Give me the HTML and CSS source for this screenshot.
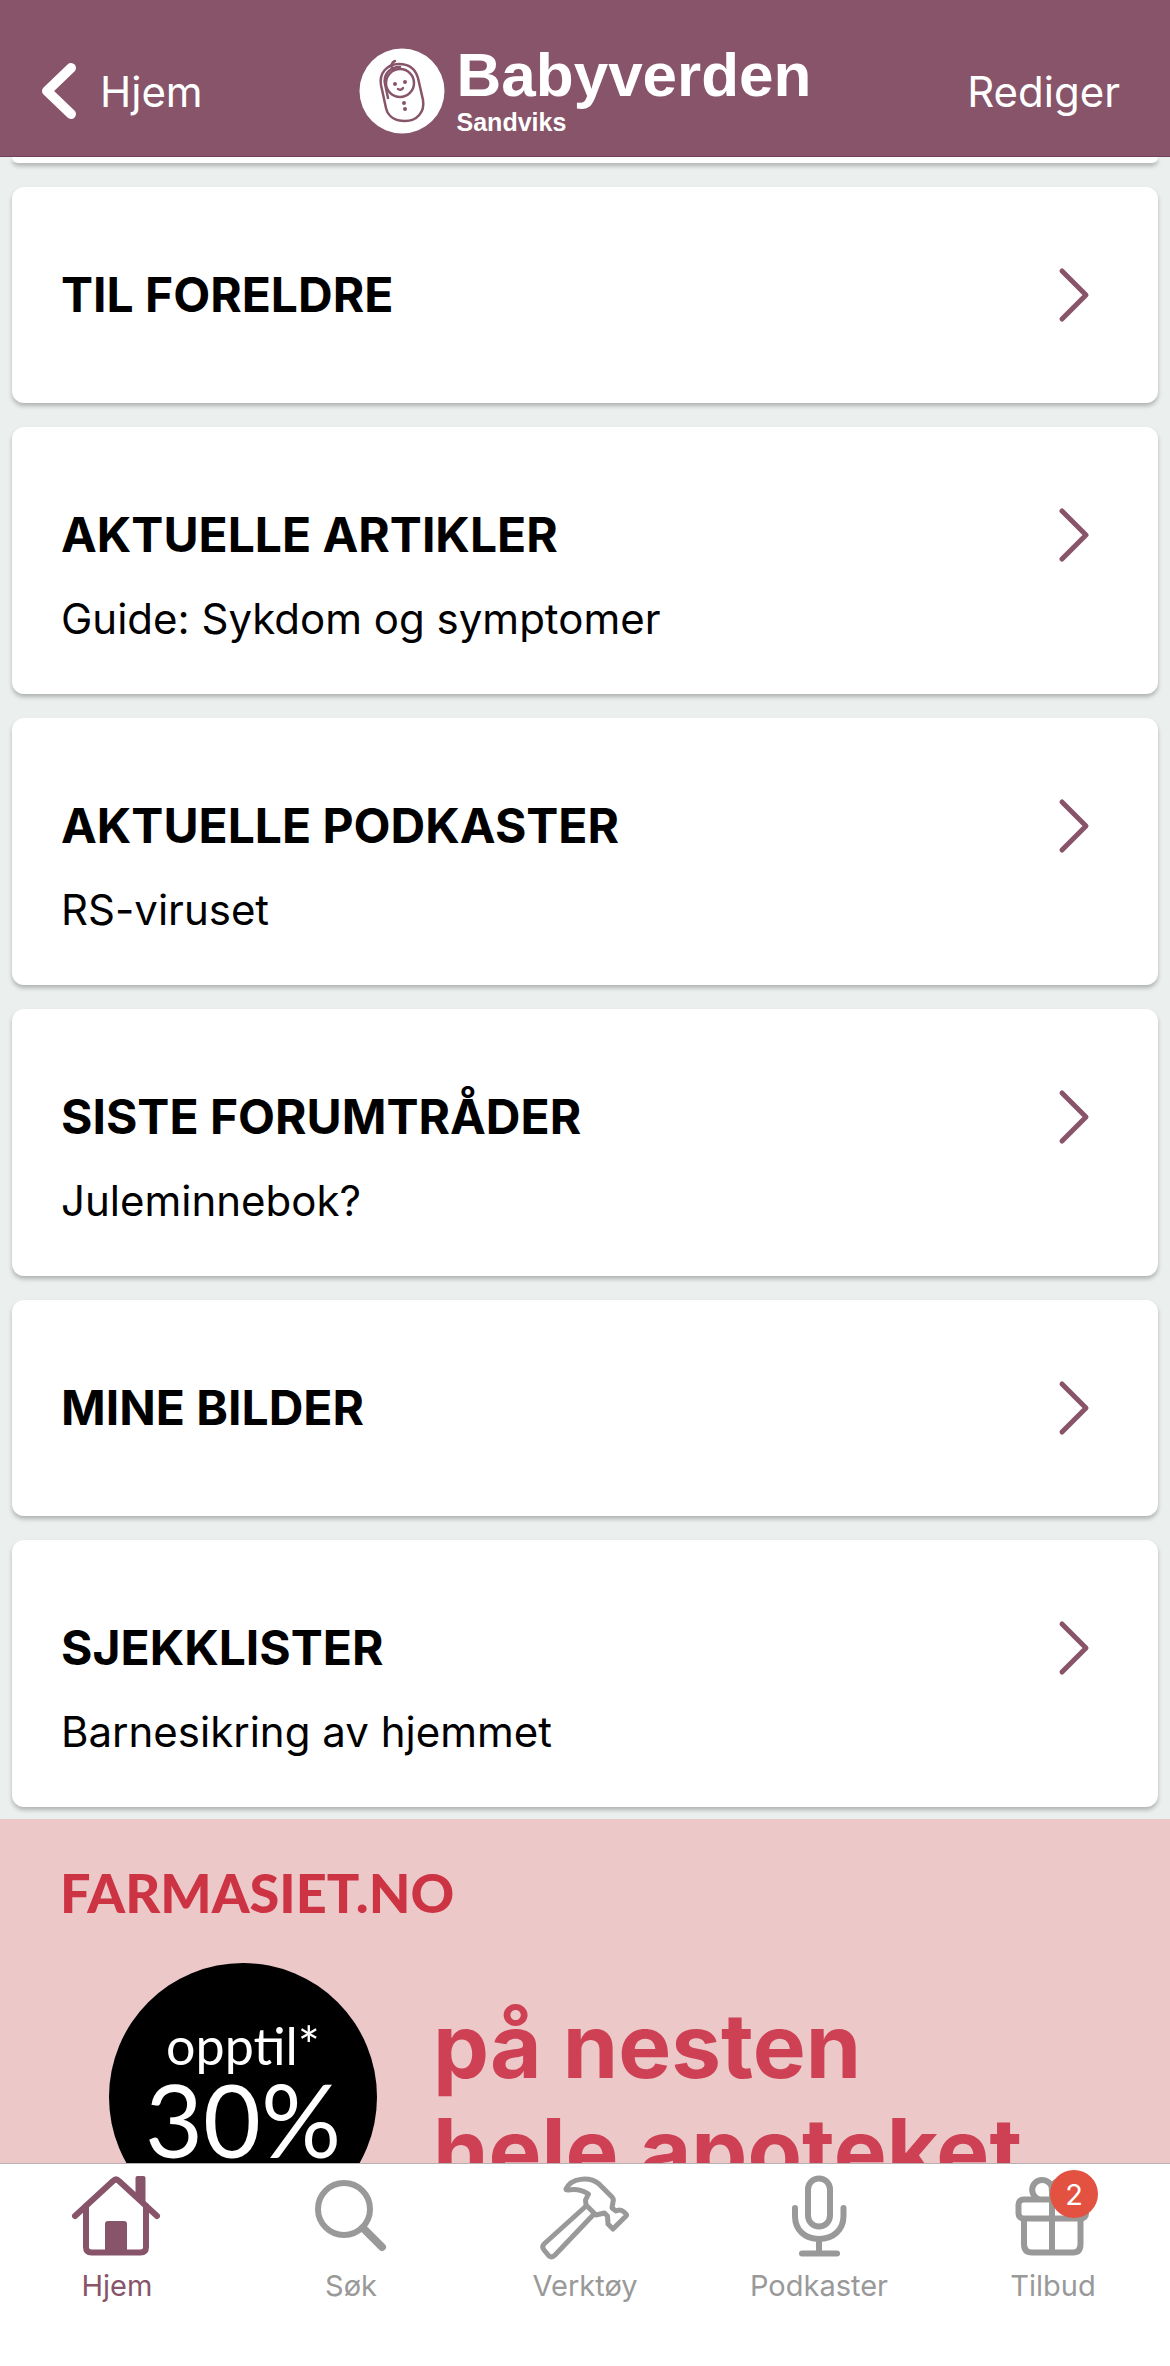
FILE: index.html
```html
<!DOCTYPE html>
<html lang="no">
<head>
  <meta charset="UTF-8">
  <meta name="viewport" content="width=device-width, initial-scale=1">
  <title>Babyverden</title>
  <link rel="stylesheet" href="styles.css">
</head>
<body>
  <header class="header">
    <a href="#" class="back">
      <svg class="back-icon" width="36" height="58" viewBox="0 0 36 58"><path d="M31 6L7 29L31 52"/></svg>
      <span>Hjem</span>
    </a>

    <div class="logo">
      <svg class="logo-icon" width="86" height="86" viewBox="0 0 86 86">
        <circle cx="43" cy="43" r="42.5" fill="#fff"/>
        <g class="baby">
          <path d="M40 16C28 16 20 25 22 37L27 60C29 69 37 73 46 73C58 73 66 64 64 52L59 30C56 20 49 16 40 16Z"/>
          <path d="M29 50L26 36C24 26 31 19 41 19"/>
          <circle cx="41" cy="35" r="14"/>
          <path d="M34 21C31 18 33 14 36 13"/>
          <path d="M39 41C41 42 43 42 44 40"/>
        </g>
        <g fill="#875469">
          <circle cx="36" cy="36" r="2"/>
          <circle cx="46" cy="34" r="2"/>
          <circle cx="45" cy="55" r="2"/>
          <circle cx="46" cy="61" r="2"/>
        </g>
      </svg>
      <div class="logo-text">
        <span class="logo-name">Babyverden</span>
        <span class="logo-sub">Sandviks</span>
      </div>
    </div>

    <button type="button" class="edit">Rediger</button>
  </header>

  <main class="content">
    <div class="cards">
      <div class="card card-scrolled"></div>

      <a href="#" class="card">
        <div class="card-head">
          <h2>TIL FORELDRE</h2>
          <svg class="arrow" width="32" height="56" viewBox="0 0 32 56"><path d="M4 4L28 28L4 52"/></svg>
        </div>
      </a>

      <a href="#" class="card">
        <div class="card-head">
          <h2>AKTUELLE ARTIKLER</h2>
          <svg class="arrow" width="32" height="56" viewBox="0 0 32 56"><path d="M4 4L28 28L4 52"/></svg>
        </div>
        <p>Guide: Sykdom og symptomer</p>
      </a>

      <a href="#" class="card">
        <div class="card-head">
          <h2>AKTUELLE PODKASTER</h2>
          <svg class="arrow" width="32" height="56" viewBox="0 0 32 56"><path d="M4 4L28 28L4 52"/></svg>
        </div>
        <p>RS-viruset</p>
      </a>

      <a href="#" class="card">
        <div class="card-head">
          <h2>SISTE FORUMTRÅDER</h2>
          <svg class="arrow" width="32" height="56" viewBox="0 0 32 56"><path d="M4 4L28 28L4 52"/></svg>
        </div>
        <p>Juleminnebok?</p>
      </a>

      <a href="#" class="card">
        <div class="card-head">
          <h2>MINE BILDER</h2>
          <svg class="arrow" width="32" height="56" viewBox="0 0 32 56"><path d="M4 4L28 28L4 52"/></svg>
        </div>
      </a>

      <a href="#" class="card">
        <div class="card-head">
          <h2>SJEKKLISTER</h2>
          <svg class="arrow" width="32" height="56" viewBox="0 0 32 56"><path d="M4 4L28 28L4 52"/></svg>
        </div>
        <p>Barnesikring av hjemmet</p>
      </a>
    </div>

    <a href="#" class="banner">
      <div class="banner-brand">FARMASIET.NO</div>
      <div class="banner-row">
        <div class="banner-circle">
          <span class="banner-upto">opptil*</span>
          <span class="banner-percent">30%</span>
        </div>
        <div class="banner-text">på nesten<br>hele apoteket</div>
      </div>
    </a>
  </main>

  <nav class="tabs">
    <a href="#" class="tab active">
      <svg class="tab-icon" width="96" height="92" viewBox="0 0 96 92">
        <path d="M6 46L44 11Q47 8 50 11L88 46"/>
        <path d="M17 36V77Q17 82.5 22.5 82.5H71.5Q77 82.5 77 77V36"/>
        <path class="filled" d="M66.500 27V8Q66.500 6 68.500 6H74.500Q76.500 6 76.500 8V36Z"/>
        <rect class="filled" x="36" y="51" width="22" height="32" rx="3"/>
      </svg>
      <span>Hjem</span>
    </a>
    <a href="#" class="tab">
      <svg class="tab-icon" width="96" height="92" viewBox="0 0 96 92">
        <circle cx="41" cy="39" r="26"/>
        <path class="handle" d="M60 58L79 77"/>
      </svg>
      <span>Søk</span>
    </a>
    <a href="#" class="tab">
      <svg class="tab-icon hammer" width="96" height="92" viewBox="0 0 96 92">
        <path d="M29 19C34 8 52 6 62 14L75 27Q77 29 76 32L75 38L79 41L82 40Q85 40 87 42L89 44Q90 45 89 46L76 59L71 54L70.500 46L67.500 43L59 45L49 35L48.500 30L51.500 24Q42 18 31 20Q29 20 29 19Z"/>
        <path d="M48 37L7 74Q4.500 77 7 80L12 86Q15 88 18 85L57 44"/>
      </svg>
      <span>Verktøy</span>
    </a>
    <a href="#" class="tab">
      <svg class="tab-icon" width="96" height="92" viewBox="0 0 96 92">
        <rect x="37" y="8.500" width="22" height="48" rx="11"/>
        <path d="M24 38V46C24 60 34 69 48 69S72.500 60 72.500 46V38"/>
        <path d="M48 69V83M31 83.500H66"/>
      </svg>
      <span>Podkaster</span>
    </a>
    <a href="#" class="tab">
      <div class="icon-wrap">
        <svg class="tab-icon" width="96" height="92" viewBox="0 0 96 92">
          <rect x="13.500" y="29.500" width="67.500" height="19" rx="5"/>
          <path d="M19 49V74Q19 82.500 27 82.500H68Q75.500 82.500 75.500 74V49"/>
          <path d="M47 29V82"/>
          <path d="M33 29A10 10 0 1 1 47 22V29M47 22A10 10 0 1 1 61 29"/>
        </svg>
        <span class="badge">2</span>
      </div>
      <span>Tilbud</span>
    </a>
  </nav>
</body>
</html>
```
FILE: styles.css
```css
* {
  box-sizing: border-box;
}

body {
  display: flex;
  flex-direction: column;
  height: 100vh;
  margin: 0;
  background-color: #ebefee;
  color: #000;
  font-family: Inter, Roboto, sans-serif;
  font-size: 42px;
}

a {
  color: inherit;
  text-decoration: none;
}

/* Header */
.header {
  display: grid;
  grid-template-columns: 1fr auto 1fr;
  align-items: center;
  flex-shrink: 0;
  padding: 40px 40px 14px;
  background-color: #875469;
  border-bottom: 1px solid #70405a;
  color: #fff;
}

.back {
  display: flex;
  align-items: center;
  gap: 24px;
}

.back-icon {
  fill: none;
  stroke: #fff;
  stroke-width: 10;
  stroke-linecap: round;
  stroke-linejoin: round;
}

.edit {
  justify-self: end;
  padding: 0 10px 0 0;
  border: none;
  background: none;
  color: #fff;
  font: inherit;
  cursor: pointer;
}

.logo {
  display: flex;
  align-items: center;
  gap: 12px;
  font-family: "Liberation Sans", Arial, sans-serif;
  font-weight: bold;
}

.baby {
  fill: none;
  stroke: #875469;
  stroke-width: 2.5;
  stroke-linecap: round;
}

.logo-text {
  display: flex;
  flex-direction: column;
  height: 102px;
}

.logo-name {
  font-size: 62px;
  line-height: 70px;
}

.logo-sub {
  font-size: 25px;
  line-height: 24px;
}

/* Cards */
.content {
  flex: 1;
  min-height: 0;
  overflow: hidden;
}

.cards {
  display: flex;
  flex-direction: column;
  gap: 24px;
  padding: 0 12px 12px;
}

.card {
  display: block;
  padding: 80px 68px 47px 49px;
  background-color: #fff;
  border-radius: 12px;
  box-shadow: 0 3px 4px rgba(0, 0, 0, 0.25);
}

/* Bottom edge of the card that is scrolled under the header */
.card-scrolled {
  padding: 6px 0 0;
  border-radius: 0 0 12px 12px;
}

.card-head {
  display: flex;
  align-items: center;
  justify-content: space-between;
}

.card-head:only-child {
  margin-bottom: 33px;
}

h2 {
  margin: 0;
  font-size: 48px;
  font-weight: 700;
  line-height: 56px;
}

.card p {
  margin: 28px 0 0;
  line-height: 56px;
}

.arrow {
  fill: none;
  stroke: #875469;
  stroke-width: 5;
  stroke-linecap: round;
  stroke-linejoin: round;
}

/* Banner */
.banner {
  display: block;
  height: 100%;
  padding: 46px 60px 0;
  background-color: #ecc8c9;
  color: #ce4154;
}

.banner-brand {
  color: #cc3343;
  font-family: Lato, sans-serif;
  font-size: 54px;
  font-weight: 900;
  line-height: 56px;
}

.banner-row {
  display: flex;
  align-items: flex-start;
  gap: 56px;
  padding: 42px 49px 0;
}

.banner-circle {
  display: flex;
  flex-direction: column;
  align-items: center;
  flex-shrink: 0;
  width: 268px;
  height: 268px;
  padding-top: 52px;
  background-color: #000;
  border-radius: 50%;
  color: #fff;
  font-family: Lato, sans-serif;
}

.banner-upto {
  font-size: 52px;
  line-height: 60px;
}

.banner-percent {
  font-size: 100px;
  line-height: 88px;
}

.banner-text {
  padding-top: 30px;
  font-size: 89px;
  font-weight: 700;
  line-height: 105px;
  white-space: nowrap;
}

/* Tab bar */
.tabs {
  display: flex;
  flex-shrink: 0;
  height: 203px;
  padding-top: 6px;
  background-color: #fff;
  border-top: 1px solid #b8b2b2;
}

.tab {
  display: flex;
  flex: 1;
  flex-direction: column;
  align-items: center;
  gap: 6px;
  color: #999;
  font-size: 29px;
  line-height: 36px;
}

.tab.active {
  color: #875469;
}

.tab-icon {
  display: block;
  fill: none;
  stroke: currentColor;
  stroke-width: 6;
  stroke-linecap: round;
  stroke-linejoin: round;
}

.hammer {
  stroke-width: 5;
}

.filled {
  fill: currentColor;
  stroke: none;
}

.handle {
  stroke-width: 8;
}

.icon-wrap {
  position: relative;
}

.badge {
  position: absolute;
  top: 0;
  right: 3px;
  width: 48px;
  height: 48px;
  background-color: #e35141;
  border-radius: 50%;
  color: #fff;
  line-height: 49px;
  text-align: center;
}
```
